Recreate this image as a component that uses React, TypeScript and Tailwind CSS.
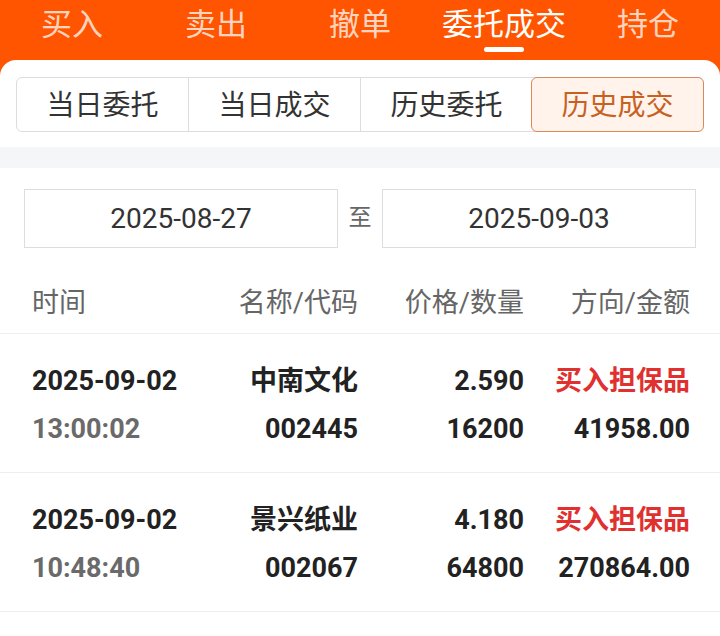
import React from "react";

const topTabs = ["买入", "卖出", "撤单", "委托成交", "持仓"];
const segTabs = ["当日委托", "当日成交", "历史委托", "历史成交"];

const rows = [
  {
    date: "2025-09-02",
    time: "13:00:02",
    name: "中南文化",
    code: "002445",
    price: "2.590",
    qty: "16200",
    dir: "买入担保品",
    amount: "41958.00",
  },
  {
    date: "2025-09-02",
    time: "10:48:40",
    name: "景兴纸业",
    code: "002067",
    price: "4.180",
    qty: "64800",
    dir: "买入担保品",
    amount: "270864.00",
  },
];

export default function App() {
  return (
    <div
      className="w-[720px] h-[636px] overflow-hidden bg-[#ff5500]"
      style={{ fontFamily: 'Roboto, "Noto Sans CJK SC", sans-serif' }}
    >
      {/* top tabs */}
      <div className="grid grid-cols-5 h-[60px]">
        {topTabs.map((t, i) => (
          <div key={t} className="relative flex justify-center">
            <span
              className={`mt-[7px] text-[31px] leading-[36px] ${
                i === 3 ? "text-white" : "text-white/75"
              }`}
            >
              {t}
            </span>
            {i === 3 && (
              <div className="absolute top-[47px] left-1/2 -translate-x-1/2 w-[40px] h-[5px] rounded-full bg-white" />
            )}
          </div>
        ))}
      </div>

      <div className="bg-white rounded-t-[16px] h-[576px]">
        {/* segmented tabs */}
        <div className="pt-[17px] pb-[15px] px-4">
          <div className="flex h-[55px] border border-[#dddddd] rounded-[6px]">
            {segTabs.map((t, i) => (
              <div
                key={t}
                className={`flex-1 flex items-center justify-center pt-[3px] text-[28px] ${
                  i === 3
                    ? "bg-[#fff3ec] text-[#c8601f] border border-[#d98a5c] rounded-[6px] -m-px"
                    : "text-[#333333]"
                } ${i > 0 && i < 3 ? "border-l border-[#dddddd]" : ""}`}
              >
                {t}
              </div>
            ))}
          </div>
        </div>

        <div className="h-[21px] bg-[#f5f6f7]" />

        {/* date range */}
        <div className="flex items-center px-[24px] pt-[21px]">
          <div className="w-[314px] h-[59px] border border-[#dddddd] flex items-center justify-center text-[28px] text-[#333333]">
            2025-08-27
          </div>
          <div className="flex-1 text-center text-[23px] text-[#666666]">至</div>
          <div className="w-[314px] h-[59px] border border-[#dddddd] flex items-center justify-center text-[28px] text-[#333333]">
            2025-09-03
          </div>
        </div>

        {/* header */}
        <div className="mt-[25px] h-[61px] grid grid-cols-[1fr_128px_166px_166px] items-center pl-[32px] pr-[30px] border-b border-[#eeeeee] text-[27px] text-[#666666]">
          <div>时间</div>
          <div className="text-right">名称/代码</div>
          <div className="text-right">价格/数量</div>
          <div className="text-right">方向/金额</div>
        </div>

        {rows.map((r) => (
          <div
            key={r.code}
            className="h-[139px] grid grid-cols-[1fr_128px_166px_166px] content-center pt-[3px] pl-[32px] pr-[30px] border-b border-[#eeeeee] text-[27px] font-bold leading-[48px] text-[#222222]"
          >
            <div>
              <div>{r.date}</div>
              <div className="text-[#6a6a6a]">{r.time}</div>
            </div>
            <div className="text-right">
              <div>{r.name}</div>
              <div>{r.code}</div>
            </div>
            <div className="text-right">
              <div>{r.price}</div>
              <div>{r.qty}</div>
            </div>
            <div className="text-right">
              <div className="text-[#e03030]">{r.dir}</div>
              <div>{r.amount}</div>
            </div>
          </div>
        ))}
      </div>
    </div>
  );
}
